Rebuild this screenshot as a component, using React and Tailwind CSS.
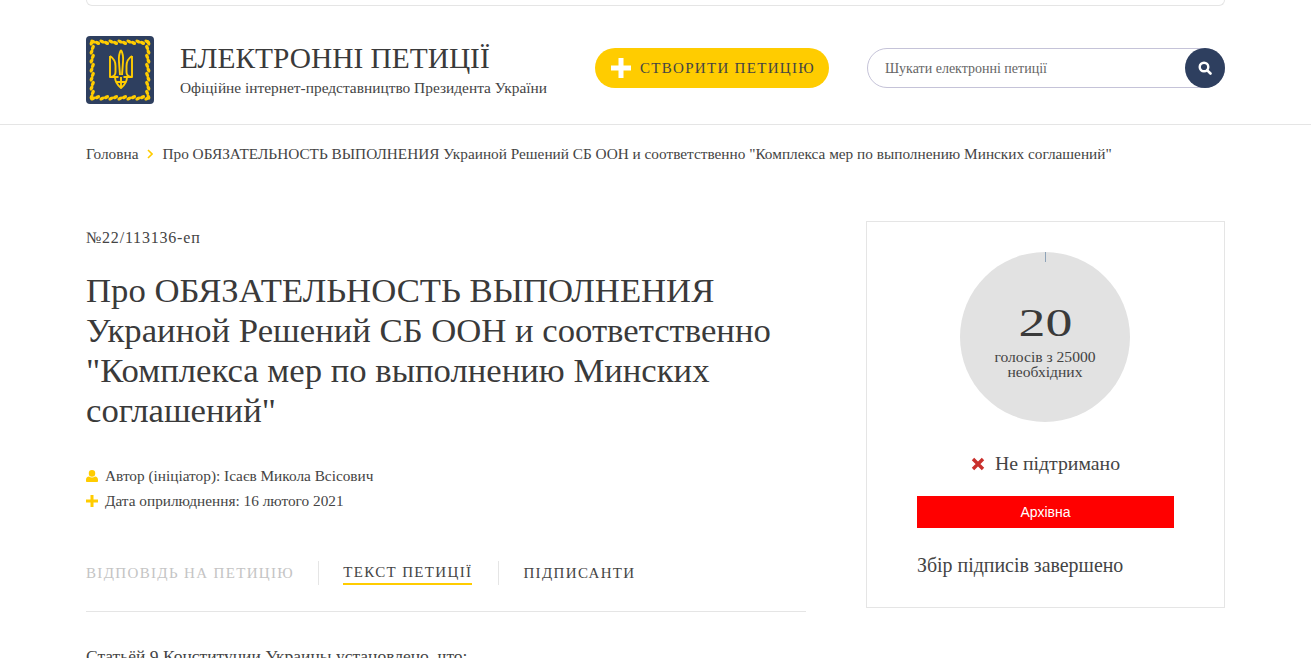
import React from 'react';

const serif = { fontFamily: '"Liberation Serif", serif' };

// leaf border of the logo, one row of small ellipses per side
const leaves = [];
for (let i = 0; i < 13; i++) {
  const p = 7 + i * 4.5;
  const a = 5.5 + (i % 2) * 1.4;
  const b = 62.5 - (i % 2) * 1.4;
  leaves.push(<ellipse key={`t${i}`} cx={p} cy={a} rx="2.8" ry="1.7" transform={`rotate(25 ${p} ${a})`} />);
  leaves.push(<ellipse key={`b${i}`} cx={p} cy={b} rx="2.8" ry="1.7" transform={`rotate(-25 ${p} ${b})`} />);
  leaves.push(<ellipse key={`l${i}`} cx={a} cy={p} rx="1.7" ry="2.8" transform={`rotate(25 ${a} ${p})`} />);
  leaves.push(<ellipse key={`r${i}`} cx={b} cy={p} rx="1.7" ry="2.8" transform={`rotate(-25 ${b} ${p})`} />);
}

const Logo = () => (
  <svg width="68" height="68" viewBox="0 0 68 68" className="shrink-0">
    <rect width="68" height="68" rx="4" fill="#2e3f5f" />
    <g fill="#fc0">{leaves}</g>
    <g fill="none" stroke="#fc0" strokeWidth="1.9" strokeLinejoin="round">
      <path d="M35 14c-2 3.500-2.500 7-2 12l1 13M35 14c2 3.500 2.500 7 2 12l-1 13" />
      <path d="M24 20v21h8.500M46 20v21h-8.500" />
      <path d="M24 20c4 2.500 5.500 6 5.500 10v6c0 2.500-1.500 4.500-4.500 5M46 20c-4 2.500-5.500 6-5.500 10v6c0 2.500 1.500 4.500 4.500 5" />
      <path d="M29 41c0 5 3 8.500 6 11 3-2.500 6-6 6-11" />
      <path d="M35 41v11M30 46h10" />
    </g>
  </svg>
);

const Plus = ({ size, color }) => (
  <svg width={size} height={size} viewBox="0 0 20 20" className="shrink-0">
    <path d="M7.500 0h5v7.500H20v5h-7.500V20h-5v-7.500H0v-5h7.500z" fill={color} />
  </svg>
);

const User = () => (
  <svg width="12" height="12" viewBox="0 0 12 12" className="shrink-0">
    <path d="M6 0a3.200 3.200 0 0 1 3.200 3.400A3.200 3.200 0 0 1 6 6.800a3.200 3.200 0 0 1-3.200-3.400A3.200 3.200 0 0 1 6 0zM3 6.400c.8.700 1.800 1.100 3 1.100s2.200-.4 3-1.100c1.900.2 3 1.400 3 3.300V11c0 .6-.5 1-1 1H1c-.5 0-1-.4-1-1V9.700c0-1.900 1.100-3.100 3-3.300z" fill="#fc0" />
  </svg>
);

export default function App() {
  return (
    <div className="h-[658px] overflow-hidden bg-white text-[#3a3a3a]" style={serif}>
      <div className="mx-auto w-[1139px] h-[6px] border border-t-0 border-[#e5e5e5] rounded-b-[6px]" />

      <header className="border-b border-[#e5e5e5] h-[119px]">
        <div className="mx-auto w-[1139px] flex items-start pt-[30px]">
          <Logo />
          <div className="ml-[26px] w-[415px] pt-[4px]">
            <div className="text-[29.4px] leading-[36px] whitespace-nowrap">ЕЛЕКТРОННІ ПЕТИЦІЇ</div>
            <div className="text-[15.4px] leading-[20px] mt-[2px] whitespace-nowrap text-[#444]">Офіційне інтернет-представництво Президента України</div>
          </div>
          <a className="mt-[12px] flex items-center w-[234px] h-10 rounded-full bg-[#fc0] pl-[16px] text-[15px] tracking-[1.3px] text-[#444] whitespace-nowrap">
            <Plus size={20} color="#fff" />
            <span className="ml-[9px]">СТВОРИТИ ПЕТИЦІЮ</span>
          </a>
          <div className="mt-[12px] ml-[38px] w-[358px] h-10 rounded-full border border-[#c5c3d8] flex items-center relative pl-[17px] text-[14px] text-[#666]">
            Шукати електронні петиції
            <span className="absolute right-[-1px] top-[-1px] w-10 h-10 rounded-full bg-[#2e3f5f] flex items-center justify-center">
              <svg width="14" height="14" viewBox="0 0 14 14">
                <circle cx="6" cy="6" r="4.300" fill="none" stroke="#fff" strokeWidth="2.400" />
                <path d="M9.300 9.300l3.200 3.200" stroke="#fff" strokeWidth="2.600" strokeLinecap="round" />
              </svg>
            </span>
          </div>
        </div>
      </header>

      <main className="mx-auto w-[1139px]">
        <nav className="flex items-center h-[20px] mt-[19px] text-[15.3px] whitespace-nowrap text-[#444]">
          <span>Головна</span>
          <svg width="6" height="10" viewBox="0 0 6 10" className="ml-[9px] mr-[9px]"><path d="M1 1l4 4-4 4" fill="none" stroke="#fc0" strokeWidth="1.600" /></svg>
          <span>Про ОБЯЗАТЕЛЬНОСТЬ ВЫПОЛНЕНИЯ Украиной Решений СБ ООН и соответственно "Комплекса мер по выполнению Минских соглашений"</span>
        </nav>

        <div className="flex justify-between mt-[57px]">
          <section className="w-[720px]">
            <div className="text-[16px] tracking-[0.8px] leading-[20px] mt-[7px] text-[#444]">№22/113136-еп</div>
            <h1 className="text-[34.7px] leading-[40px] mt-[23px] font-normal whitespace-nowrap">
              Про ОБЯЗАТЕЛЬНОСТЬ ВЫПОЛНЕНИЯ<br />Украиной Решений СБ ООН и соответственно<br />"Комплекса мер по выполнению Минских<br />соглашений"
            </h1>
            <div className="mt-[32px] text-[15.3px] leading-[25px] text-[#444]">
              <div className="flex items-center gap-[7px] whitespace-nowrap"><User />Автор (ініціатор): Ісаєв Микола Всісович</div>
              <div className="flex items-center gap-[7px] whitespace-nowrap"><Plus size={12} color="#fc0" />Дата оприлюднення: 16 лютого 2021</div>
            </div>
            <div className="flex items-start mt-[48px] h-[51px] border-b border-[#e5e5e5] text-[15px] tracking-[1.35px] whitespace-nowrap">
              <span className="pr-[24px] h-[24px] border-r border-[#e5e5e5] text-[#c4c4c4] leading-[24px]">ВІДПОВІДЬ НА ПЕТИЦІЮ</span>
              <span className="ml-[24px] h-[24px] border-b-2 border-[#fc0] leading-[22px] text-[#444]">ТЕКСТ ПЕТИЦІЇ</span>
              <span className="ml-[26px] pl-[24px] h-[24px] border-l border-[#e5e5e5] leading-[24px] text-[#444]">ПІДПИСАНТИ</span>
            </div>
            <p className="mt-[34px] text-[17.5px] leading-[20px] text-[#444] whitespace-nowrap">Статьёй 9 Конституции Украины установлено, что:</p>
          </section>

          <aside className="w-[359px] h-[387px] border border-[#e5e5e5] pt-[30px]">
            <div className="relative ml-[93px] w-[170px] h-[170px] rounded-full bg-[#e2e2e2] flex flex-col items-center">
              <span className="absolute top-0 left-[85px] w-px h-[10px] bg-[#8ea3b8]" />
              <div className="mt-[44px] h-[53px] text-[39px] leading-[54px] scale-x-[1.38]">20</div>
              <div className="text-[15.6px] leading-[15px] text-center text-[#444]">голосів з 25000<br />необхідних</div>
            </div>
            <div className="flex items-center justify-center mt-[31px] h-[22px] text-[19.8px] text-[#444]">
              <svg width="14" height="14" viewBox="0 0 14 14" className="mr-[10px]"><path d="M2 2l10 10M12 2L2 12" stroke="#c9302c" strokeWidth="3.400" /></svg>
              Не підтримано
            </div>
            <div className="mx-auto mt-[21px] w-[257px] h-[32px] bg-[#f00] text-white text-[14px] leading-[32px] text-center" style={{ fontFamily: '"Liberation Sans", sans-serif' }}>Архівна</div>
            <div className="ml-[50px] mt-[26px] text-[19.9px] leading-[22px] text-[#444]">Збір підписів завершено</div>
          </aside>
        </div>
      </main>
    </div>
  );
}
